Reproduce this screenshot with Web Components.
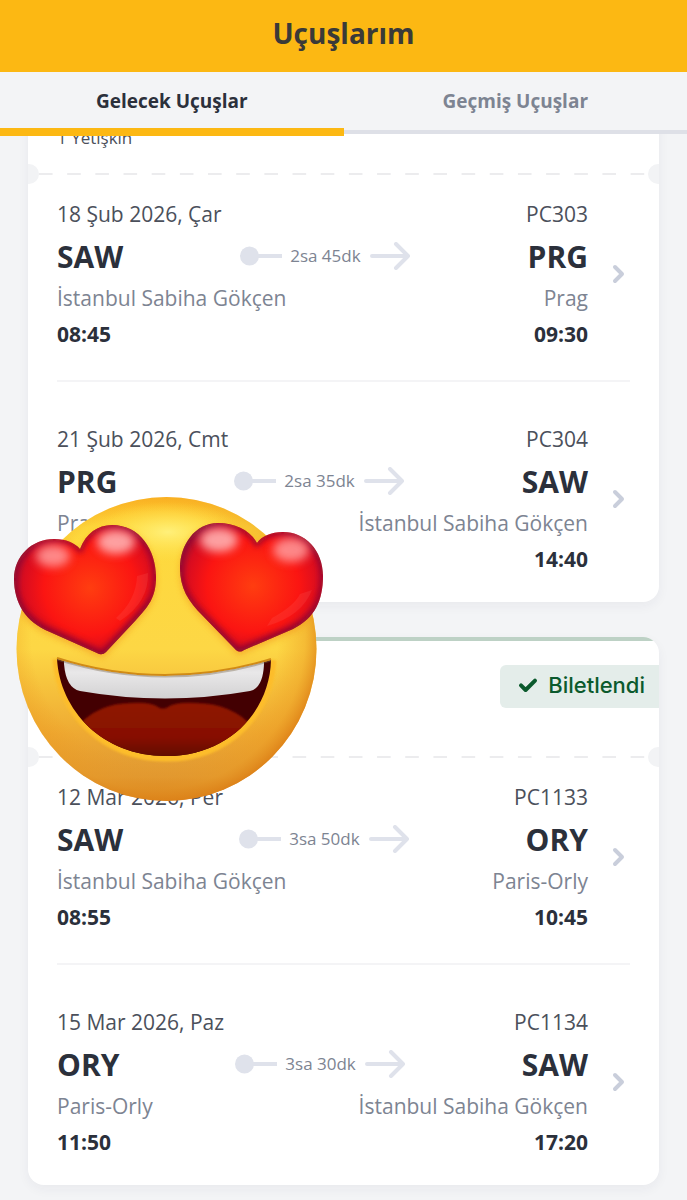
<!DOCTYPE html>
<html lang="tr">
<head>
<meta charset="utf-8">
<meta name="viewport" content="width=device-width, initial-scale=1">
<title>Uçuşlarım</title>
<style>
  body {
    margin: 0;
    background: #f3f4f6;
    color: #2b303b;
    font-family: "Open Sans", "Noto Sans", sans-serif;
  }
</style>
</head>
<body>
<flights-page>
  <page-header>Uçuşlarım</page-header>
  <flight-tabs></flight-tabs>
  <flight-list>
    <trip-card class="scrolled" passengers="1 Yetişkin">
      <flight-leg date="18 Şub 2026, Çar" number="PC303" from="SAW" to="PRG" from-city="İstanbul Sabiha Gökçen" to-city="Prag" departs="08:45" arrives="09:30" duration="2sa 45dk"></flight-leg>
      <flight-leg date="21 Şub 2026, Cmt" number="PC304" from="PRG" to="SAW" from-city="Prag" to-city="İstanbul Sabiha Gökçen" departs="" arrives="14:40" duration="2sa 35dk"></flight-leg>
    </trip-card>
    <trip-card status="Biletlendi">
      <flight-leg date="12 Mar 2026, Per" number="PC1133" from="SAW" to="ORY" from-city="İstanbul Sabiha Gökçen" to-city="Paris-Orly" departs="08:55" arrives="10:45" duration="3sa 50dk"></flight-leg>
      <flight-leg date="15 Mar 2026, Paz" number="PC1134" from="ORY" to="SAW" from-city="Paris-Orly" to-city="İstanbul Sabiha Gökçen" departs="11:50" arrives="17:20" duration="3sa 30dk"></flight-leg>
    </trip-card>
  </flight-list>
  <love-sticker></love-sticker>
</flights-page>

<script>
const define = (name, render, setup) => customElements.define(name, class extends HTMLElement {
  connectedCallback() {
    if (this.shadowRoot) return;
    const root = this.attachShadow({ mode: "open" });
    root.innerHTML = render(this);
    if (setup) setup(root);
  }
});

define("flights-page", () => `
  <style>
    :host { display: block; position: relative; min-height: 100vh; }
    ::slotted(love-sticker) { position: absolute; left: 10px; top: 490px; }
  </style>
  <slot></slot>`);

define("page-header", () => `
  <style>
    :host { display: flex; align-items: center; justify-content: center; height: 72px; background: #fcb813; }
    h1 { margin: 0 0 6px; font-size: 28px; line-height: 40px; font-weight: 700; color: #3a3a38; }
  </style>
  <h1><slot></slot></h1>`);

define("flight-tabs", () => `
  <style>
    :host { display: block; position: relative; z-index: 1; background: #f3f4f6; }
    div { display: grid; grid-template-columns: 1fr 1fr; height: 58px; border-bottom: 4px solid #dee0e7; }
    button {
      position: relative; border: 0; background: none; padding: 0;
      font: 700 19px/28px "Open Sans", "Noto Sans", sans-serif; color: #7d8492; cursor: pointer;
    }
    button[aria-selected=true] { color: #2b303b; }
    button[aria-selected=true]::after {
      content: ""; position: absolute; left: 0; right: 0; bottom: -6px; height: 8px; background: #fcb813;
    }
  </style>
  <div role="tablist">
    <button role="tab" aria-selected="true">Gelecek Uçuşlar</button>
    <button role="tab" aria-selected="false">Geçmiş Uçuşlar</button>
  </div>`, root => {
    const tabs = root.querySelectorAll("button");
    tabs.forEach(tab => tab.addEventListener("click", () =>
      tabs.forEach(t => t.setAttribute("aria-selected", String(t === tab)))));
  });

define("flight-list", () => `
  <style>
    :host { display: flex; flex-direction: column; gap: 35px; overflow: hidden; padding: 0 28px 14px; }
    ::slotted(.scrolled) { margin-top: -80px; }
  </style>
  <slot></slot>`);

define("trip-card", el => `
  <style>
    :host {
      display: block; background: #fff; border-radius: 16px; overflow: hidden;
      box-shadow: 0 4px 12px rgba(40, 45, 70, .05);
    }
    header {
      box-sizing: border-box; height: 110px; border-top: 4px solid #bdd1c5; padding: 24px 0 14px 29px;
      display: flex; justify-content: space-between;
    }
    .people { margin: 0; align-self: flex-end; font-size: 17px; line-height: 24px; color: #4b505b; }
    .status {
      align-self: flex-start; margin-left: auto; display: flex; align-items: center; gap: 10px;
      box-sizing: border-box; height: 43px; padding: 0 14px 4px 18px; border-radius: 6px 0 0 6px;
      background: #e4edea; color: #0b5a2d; font: 500 22px/28px Inter, sans-serif;
    }
    .tear { display: flex; align-items: center; justify-content: space-between; height: 20px; }
    .tear i { width: 11px; height: 20px; background: #f2f3f5; }
    .tear i:first-child { border-radius: 0 10px 10px 0; }
    .tear i:last-child { border-radius: 10px 0 0 10px; margin-left: -11px; }
    .tear span {
      flex: 1; height: 2px;
      background: linear-gradient(to right, #ececee 50%, transparent 50%) 0 0 / 28px 2px round;
    }
    .legs { padding: 14px 29px 27px; display: grid; gap: 30px; }
  </style>
  <header>
    ${el.getAttribute("passengers") ? `<p class="people">${el.getAttribute("passengers")}</p>` : ""}
    ${el.getAttribute("status") ? `<span class="status">
      <svg width="20" height="16" viewBox="0 0 20 16" fill="none" stroke="currentColor" stroke-width="4" stroke-linecap="round" stroke-linejoin="round" aria-hidden="true"><path d="M3 8.4 L7.6 13 L17 3.6"/></svg>
      ${el.getAttribute("status")}</span>` : ""}
  </header>
  <div class="tear"><i></i><span></span><i></i></div>
  <div class="legs"><slot></slot></div>`);

define("flight-leg", el => {
  const a = n => el.getAttribute(n);
  return `
  <style>
    :host { display: block; }
    :host(:not(:first-child)) { border-top: 2px solid #f4f4f6; padding-top: 41px; }
    a { display: flex; align-items: center; gap: 18px; color: inherit; text-decoration: none; }
    .info { flex: 1; display: grid; row-gap: 4px; }
    .row { display: flex; justify-content: space-between; align-items: center; font-size: 21px; line-height: 32px; min-height: 32px; }
    .date { color: #4b505b; margin-bottom: 2px; }
    .codes b { font-size: 30px; line-height: 42px; }
    .city { color: #7d8492; }
    .time { font-weight: 700; }
    .route { display: flex; align-items: center; gap: 8px; font-size: 17px; line-height: 24px; color: #7d8492; margin-bottom: 2px; }
    svg { display: block; stroke: #dfe2eb; fill: none; stroke-width: 4; stroke-linecap: round; stroke-linejoin: round; }
    .go { stroke: #c9cedb; }
    .route svg circle { fill: #dfe2eb; stroke: none; }
  </style>
  <a href="#${a("number")}">
    <div class="info">
      <div class="row date"><span>${a("date")}</span><span>${a("number")}</span></div>
      <div class="row codes">
        <b>${a("from")}</b>
        <span class="route">
          <svg width="42" height="28" viewBox="0 0 42 28" aria-hidden="true"><circle cx="9.5" cy="14" r="9.5"/><path stroke-linecap="butt" d="M10 14H42"/></svg>
          <span>${a("duration")}</span>
          <svg width="42" height="28" viewBox="0 0 42 28" aria-hidden="true"><path d="M3 14H39M27 2L39 14L27 26"/></svg>
        </span>
        <b>${a("to")}</b>
      </div>
      <div class="row city"><span>${a("from-city")}</span><span>${a("to-city")}</span></div>
      <div class="row time"><span>${a("departs")}</span><span>${a("arrives")}</span></div>
    </div>
    <svg class="go" width="24" height="24" viewBox="0 0 24 24" aria-hidden="true"><path d="M9 5L16 12L9 19"/></svg>
  </a>`;
});

define("love-sticker", () => `
  <style>
    :host { display: block; z-index: 2; pointer-events: none; }
    svg { display: block; }
  </style>
  <svg width="320" height="320" viewBox="10 490 320 320" role="img" aria-label="Kalp gözlü gülen yüz">
    <defs>
      <linearGradient id="skin" x1="0" y1="0" x2="0" y2="1">
        <stop offset="0" stop-color="#fdb622"/><stop offset=".1" stop-color="#fed93c"/>
        <stop offset=".5" stop-color="#fdd745"/><stop offset=".78" stop-color="#eea932"/>
        <stop offset=".92" stop-color="#df9833"/><stop offset="1" stop-color="#cf761b"/>
      </linearGradient>
      <radialGradient id="rim" cx=".46" cy=".46" r=".57">
        <stop offset=".72" stop-color="#ef9a20" stop-opacity="0"/><stop offset=".88" stop-color="#eb9a22" stop-opacity=".45"/>
        <stop offset="1" stop-color="#d97812" stop-opacity=".95"/>
      </radialGradient>
      <radialGradient id="glow"><stop offset="0" stop-color="#fff07a"/><stop offset="1" stop-color="#ffe34d" stop-opacity="0"/></radialGradient>
      <radialGradient id="heartL" gradientUnits="userSpaceOnUse" cx="90" cy="588" r="84">
        <stop offset="0" stop-color="#ff3d10"/><stop offset=".55" stop-color="#fb1512"/>
        <stop offset=".8" stop-color="#d80c20"/><stop offset="1" stop-color="#85123a"/>
      </radialGradient>
      <radialGradient id="heartR" gradientUnits="userSpaceOnUse" cx="253" cy="586" r="84">
        <stop offset="0" stop-color="#ff3d10"/><stop offset=".55" stop-color="#fb1512"/>
        <stop offset=".8" stop-color="#d80c20"/><stop offset="1" stop-color="#85123a"/>
      </radialGradient>
      <linearGradient id="teeth" x1="0" y1="0" x2="0" y2="1"><stop offset="0" stop-color="#cfcdcf"/><stop offset=".4" stop-color="#e9e8e9"/><stop offset="1" stop-color="#d2d1d2"/></linearGradient>
      <linearGradient id="tongue" x1="0" y1="0" x2="0" y2="1"><stop offset="0" stop-color="#8f1602"/><stop offset=".6" stop-color="#871000"/><stop offset="1" stop-color="#5c0602"/></linearGradient>
      <filter id="soft" x="-50%" y="-50%" width="200%" height="200%"><feGaussianBlur stdDeviation="5"/></filter>
      <filter id="soft2" x="-30%" y="-30%" width="160%" height="160%"><feGaussianBlur stdDeviation="3"/></filter>
      <filter id="soft3" x="-30%" y="-30%" width="160%" height="160%"><feGaussianBlur stdDeviation="1"/></filter>
      <path id="hl" d="M80 549C86 533 98 525 112 525C140 525 156 550 156 577C156 597 149 606 135 621L106 652Q102 656 97 653L50 632C25 622 14 602 14 579C14 556 32 539 54 539C66 539 75 543 80 549Z"/>
      <path id="hr" d="M257 543C250 530 235 523 218 523C195 523 180 545 180 568C180 588 188 601 203 616L236 650Q240 653 244 650L293 629C315 618 323 600 323 576C323 550 305 532 283 532C271 532 262 536 257 543Z"/>
      <path id="mouth" d="M57 659Q110 676 165 676Q220 676 271 660C270 710 230 756 166 756C102 756 60 710 57 659Z"/>
      <clipPath id="cf"><ellipse cx="166.500" cy="649" rx="150" ry="152"/></clipPath>
      <clipPath id="cl"><use href="#hl"/></clipPath>
      <clipPath id="cr"><use href="#hr"/></clipPath>
      <clipPath id="cm"><use href="#mouth"/></clipPath>
    </defs>
    <ellipse cx="166.500" cy="649" rx="150" ry="152" fill="url(#skin)"/>
    <ellipse cx="166.500" cy="649" rx="150" ry="152" fill="url(#rim)"/>
    <g clip-path="url(#cf)">
      <ellipse cx="168" cy="532" rx="72" ry="30" fill="url(#glow)"/>
      <g fill="#f3951b" opacity=".6" filter="url(#soft2)"><use href="#hl" y="3"/><use href="#hr" y="3"/></g>
    </g>
    <path d="M56 659C59 711 102 758 166 758C230 758 271 711 273 660" fill="none" stroke="#fdbd2b" stroke-width="7" filter="url(#soft3)"/>
    <use href="#mouth" fill="#430002"/>
    <path d="M57 658Q110 675 165 675Q220 675 271 659" fill="none" stroke="#d08a16" stroke-width="2"/>
    <g clip-path="url(#cm)">
      <path d="M76 728Q97 703 132 703Q150 702 158 707Q163 710 168 707Q176 702 195 703Q232 703 254 728V760H76Z" fill="url(#tongue)" filter="url(#soft3)"/>
      <path d="M64 655V664Q66 688 80 691Q165 706 250 691Q263 688 264 664V655Z" fill="url(#teeth)"/>
      <path d="M57 659Q110 676 165 676Q220 676 271 660" fill="none" stroke="#7b6a4c" stroke-width="3" opacity=".4"/>
    </g>
    <use href="#hl" fill="url(#heartL)"/>
    <g clip-path="url(#cl)">
      <use href="#hl" fill="none" stroke="#8d0a30" stroke-width="5" filter="url(#soft2)"/>
      <path d="M8 590Q22 622 60 634L102 654L156 596V664H8Z" fill="#7d1138" opacity=".7" filter="url(#soft)"/>
      <ellipse cx="53" cy="556" rx="17" ry="11" fill="#ff9c9c" opacity=".85" filter="url(#soft)"/>
      <ellipse cx="116" cy="542" rx="19" ry="12" fill="#ffb0b0" opacity=".9" filter="url(#soft)"/>
      <path d="M137 576L148 573Q149 602 120 621L116 618Q136 600 137 576Z" fill="#ff786e" opacity=".16"/>
    </g>
    <use href="#hr" fill="url(#heartR)"/>
    <g clip-path="url(#cr)">
      <use href="#hr" fill="none" stroke="#8d0a30" stroke-width="5" filter="url(#soft2)"/>
      <path d="M174 580Q186 604 208 622L238 650L284 632Q316 618 328 590V664H174Z" fill="#7d1138" opacity=".7" filter="url(#soft)"/>
      <ellipse cx="219" cy="540" rx="19" ry="12" fill="#ffb0b0" opacity=".9" filter="url(#soft)"/>
      <ellipse cx="291" cy="550" rx="18" ry="12" fill="#ff9c9c" opacity=".85" filter="url(#soft)"/>
      <path d="M312 590Q302 616 267 626L272 618Q294 606 300 594Z" fill="#ff786e" opacity=".16"/>
    </g>
  </svg>`);
</script>
</body>
</html>
